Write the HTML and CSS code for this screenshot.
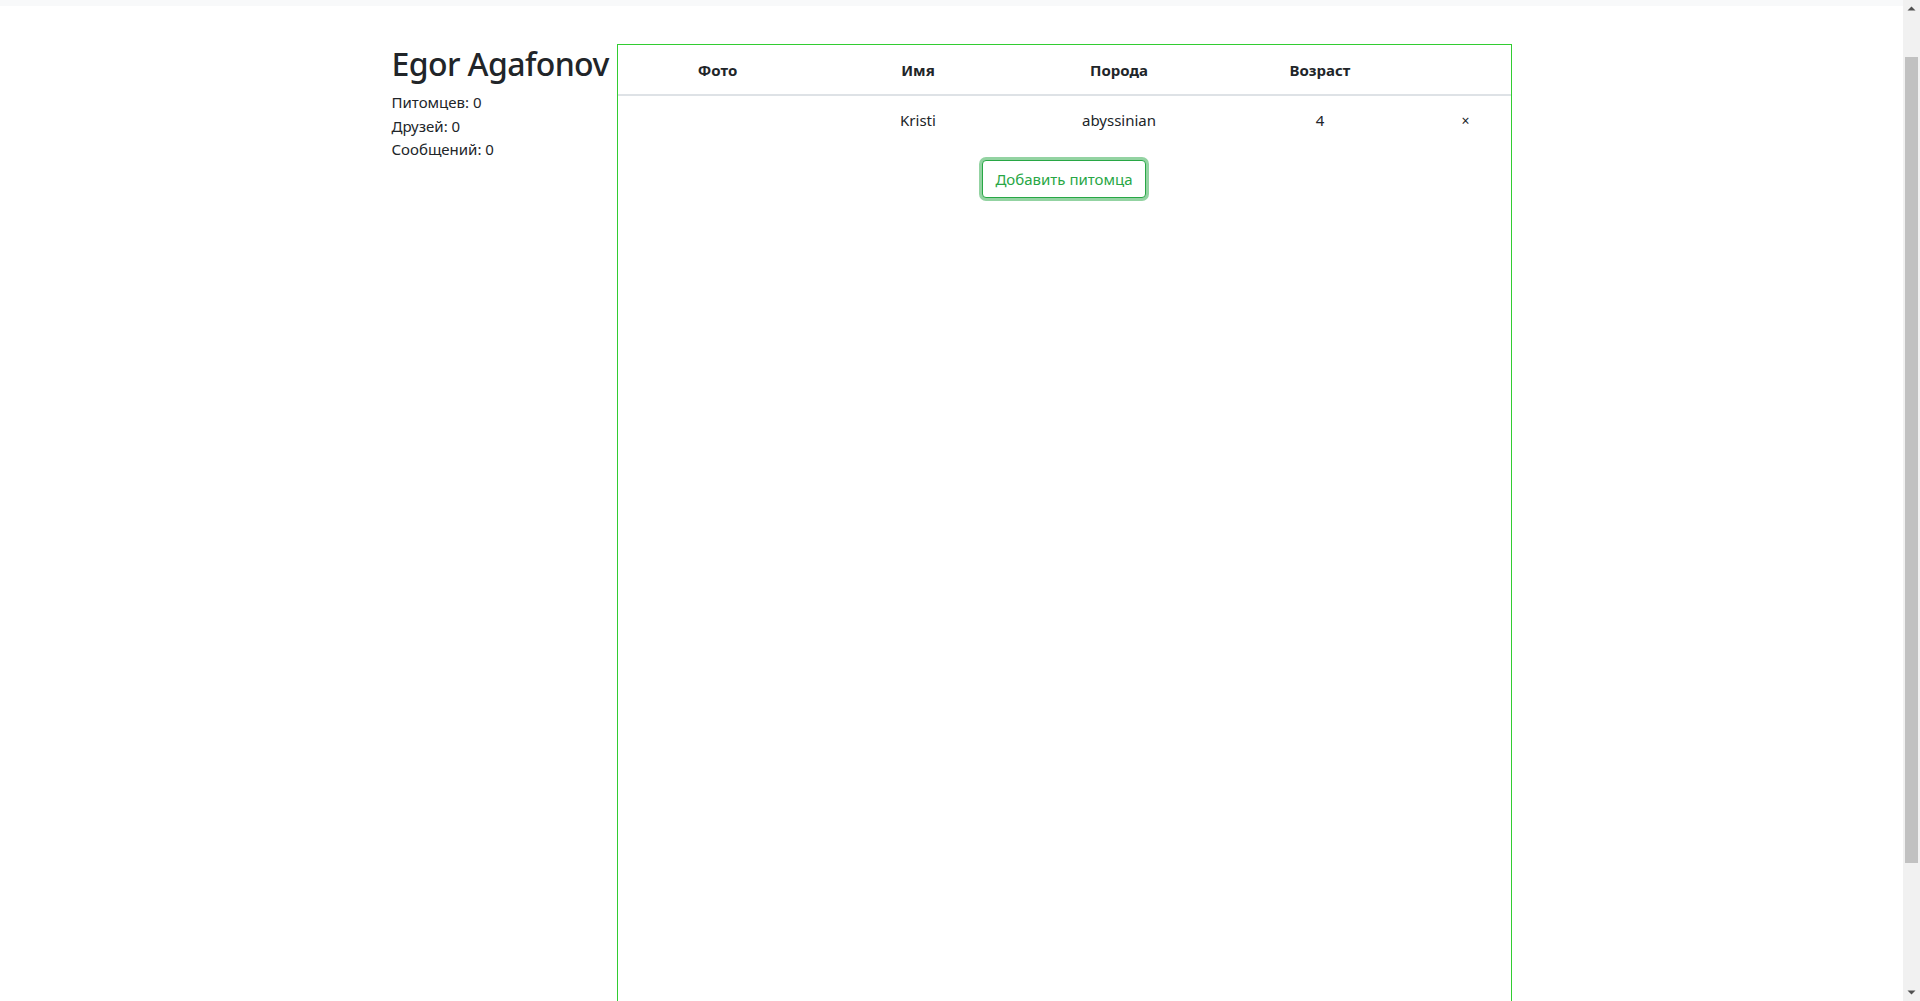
FILE: index.html
```html
<!DOCTYPE html>
<html lang="ru">
<head>
<meta charset="utf-8">
<title>Egor Agafonov</title>
<link rel="stylesheet" href="styles.css">
</head>
<body>
<nav class="navbar"></nav>
<main class="page">
  <section class="profile">
    <h2 class="profile-name">Egor Agafonov</h2>
    <div class="profile-stat">Питомцев: 0</div>
    <div class="profile-stat">Друзей: 0</div>
    <div class="profile-stat">Сообщений: 0</div>
  </section>
  <section class="pets">
    <table class="pets-table">
      <colgroup>
        <col class="col-photo">
        <col class="col-name">
        <col class="col-breed">
        <col class="col-age">
        <col class="col-del">
      </colgroup>
      <thead>
        <tr>
          <th>Фото</th>
          <th>Имя</th>
          <th>Порода</th>
          <th>Возраст</th>
          <th></th>
        </tr>
      </thead>
      <tbody>
        <tr>
          <td></td>
          <td>Kristi</td>
          <td>abyssinian</td>
          <td>4</td>
          <td class="del">×</td>
        </tr>
      </tbody>
    </table>
    <button class="add-btn" type="button">Добавить питомца</button>
  </section>
</main>
<div class="scrollbar" aria-hidden="true">
  <svg class="scroll-arrow scroll-arrow-up" width="17" height="17" viewBox="0 0 17 17"><path d="M4.5 10.5 L8.5 6.5 L12.5 10.5 Z" fill="#505050"/></svg>
  <div class="scroll-thumb"></div>
  <svg class="scroll-arrow scroll-arrow-down" width="17" height="17" viewBox="0 0 17 17"><path d="M4.5 6.5 L8.5 10.5 L12.5 6.5 Z" fill="#505050"/></svg>
</div>
<script src="scroll.js"></script>
</body>
</html>
```

FILE: styles.css
```css
html, body {
  margin: 0;
  padding: 0;
}

body {
  font-family: "Noto Sans", "Open Sans", "Liberation Sans", sans-serif;
  font-size: 16px;
  line-height: 24px;
  color: #212529;
  background: #ffffff;
  padding-right: 17px;
}

.navbar {
  height: 56px;
  background: #f8f9fa;
  margin-right: -17px;
}

.page {
  width: 1120px;
  margin: 0 auto;
  padding-top: 38px;
  display: flex;
  align-items: flex-start;
}

.profile {
  flex: 0 0 225px;
  width: 225px;
  padding-top: 1px;
}

.profile-name {
  margin: 0 0 8px 0;
  font-size: 32px;
  line-height: 38.4px;
  font-weight: 500;
  letter-spacing: -0.6px;
  white-space: nowrap;
}

.profile-stat {
  font-size: 15px;
  line-height: 23.5px;
}

.pets {
  flex: 0 0 895px;
  box-sizing: border-box;
  width: 895px;
  height: 1107px;
  border: 1px solid #32cd32;
}

.pets-table {
  width: 100%;
  border-collapse: collapse;
  table-layout: fixed;
  margin-bottom: 16px;
}

.col-photo { width: 200px; }
.col-name { width: 201px; }
.col-breed { width: 201px; }
.col-age { width: 201px; }

.pets-table th {
  padding: 13px 12px 12px;
  font-weight: 700;
  font-size: 15px;
  text-align: center;
  border-bottom: 2px solid #dee2e6;
}

.pets-table td {
  padding: 12px;
  text-align: center;
  font-size: 15px;
}

.pets-table td.del {
  font-size: 14px;
  padding-top: 13px;
  padding-bottom: 11px;
}

.add-btn {
  display: block;
  margin: 0 auto;
  height: 38px;
  padding: 6px 12px;
  font-family: inherit;
  font-size: 15px;
  line-height: 24px;
  color: #28a745;
  background: #ffffff;
  border: 1px solid #28a745;
  border-radius: 4px;
  box-shadow: 0 0 0 3px rgba(40, 167, 69, 0.5);
  cursor: pointer;
}

/* emulated browser scrollbar (overlays the right edge) */
.scrollbar {
  position: fixed;
  top: 0;
  right: 0;
  width: 17px;
  height: 100vh;
  background: #f1f1f1;
}

.scroll-arrow {
  position: absolute;
  left: 0;
  display: block;
}

.scroll-arrow-up { top: 0; }
.scroll-arrow-down { bottom: 0; }

.scroll-thumb {
  position: absolute;
  top: 57px;
  left: 2px;
  width: 13px;
  height: 806px;
  background: #c1c1c1;
}
```

FILE: scroll.js
```js
window.scrollTo(0, 50);
window.addEventListener('load', function () {
  window.scrollTo(0, 50);
});
```
